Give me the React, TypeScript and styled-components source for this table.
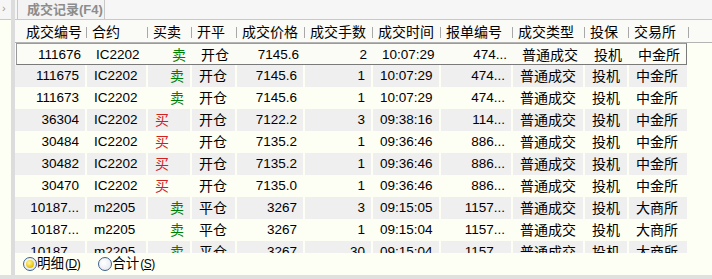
import React from "react";
import styled, { createGlobalStyle } from "styled-components";

const palette = {
  cream: "#fefff4",
  stripe: "#efeff0",
  divider: "#dcdcdc",
  line: "#c8c8c8",
  sep: "#a8a8a8",
  buy: "#d02020",
  sell: "#008000",
  text: "#000000",
};

const COLS = [70, 59, 42, 43, 66, 66, 66, 70, 70, 42, 58];
const grid = COLS.map((w) => `${w}px`).join(" ");

interface ITrade {
  id: string;
  code: string;
  side: "买" | "卖";
  open: string;
  price: string;
  qty: string;
  time: string;
  order: string;
  kind: string;
  hedge: string;
  exch: string;
}

const ic = (id: string, side: "买" | "卖", price: string, qty: string, time: string, order: string): ITrade => ({
  id,
  code: "IC2202",
  side,
  open: "开仓",
  price,
  qty,
  time,
  order,
  kind: "普通成交",
  hedge: "投机",
  exch: "中金所",
});

const m = (qty: string, time: string): ITrade => ({
  id: "10187...",
  code: "m2205",
  side: "卖",
  open: "平仓",
  price: "3267",
  qty,
  time,
  order: "1157...",
  kind: "普通成交",
  hedge: "投机",
  exch: "大商所",
});

const trades: ITrade[] = [
  ic("111676", "卖", "7145.6", "2", "10:07:29", "474..."),
  ic("111675", "卖", "7145.6", "1", "10:07:29", "474..."),
  ic("111673", "卖", "7145.6", "1", "10:07:29", "474..."),
  ic("36304", "买", "7122.2", "3", "09:38:16", "114..."),
  ic("30484", "买", "7135.2", "1", "09:36:46", "886..."),
  ic("30482", "买", "7135.2", "1", "09:36:46", "886..."),
  ic("30470", "买", "7135.0", "1", "09:36:46", "886..."),
  m("3", "09:15:05"),
  m("1", "09:15:04"),
  m("30", "09:15:04"),
];

const headers = ["成交编号", "合约", "买卖", "开平", "成交价格", "成交手数", "成交时间", "报单编号", "成交类型", "投保", "交易所"];

const App = () => {
  return (
    <Page>
      <GlobalStyle />
      <Main>
        <LeftPanel>
          <LeftStrip>›</LeftStrip>
        </LeftPanel>
        <Divider />
        <Content>
          <TabStrip>
            <Tab>成交记录(F4)</Tab>
          </TabStrip>
          <Table>
            <HeaderRow>
              {headers.map((h, i) => (
                <HeadCell key={h} first={i === 0}>
                  {h}
                </HeadCell>
              ))}
            </HeaderRow>
            {trades.map((t, i) => {
              const striped = i % 2 === 1;
              const selected = i === 0;
              return (
                <Row key={i} selected={selected}>
                  <Cell striped={striped} align="right">{t.id}</Cell>
                  <Cell striped={striped}>{t.code}</Cell>
                  <Cell striped={striped} cjk align={t.side === "买" ? "left" : "right"} color={t.side === "买" ? palette.buy : palette.sell}>
                    {t.side}
                  </Cell>
                  <Cell striped={striped} cjk>{t.open}</Cell>
                  <Cell striped={striped} align="right">{t.price}</Cell>
                  <Cell striped={striped} align="right">{t.qty}</Cell>
                  <Cell striped={striped}>{t.time}</Cell>
                  <Cell striped={striped} align="right">{t.order}</Cell>
                  <Cell striped={striped} cjk>{t.kind}</Cell>
                  <Cell striped={striped} cjk>{t.hedge}</Cell>
                  <Cell striped={striped} cjk>{t.exch}</Cell>
                </Row>
              );
            })}
          </Table>
          <Footer>
            <RadioItem>
              <RadioDot checked />
              <span>明细</span>
              <Key>(<u>D</u>)</Key>
            </RadioItem>
            <RadioItem>
              <RadioDot />
              <span>合计</span>
              <Key>(<u>S</u>)</Key>
            </RadioItem>
          </Footer>
        </Content>
      </Main>
      <BottomBar />
    </Page>
  );
};

const GlobalStyle = createGlobalStyle`
  html, body {
    margin: 0;
    padding: 0;
    background: ${palette.cream};
  }
  body {
    font-family: "Liberation Sans", Arial, "Noto Sans CJK SC", sans-serif;
    font-size: 13px;
    color: ${palette.text};
  }
`;

const Page = styled.div`
  width: 712px;
  height: 279px;
  display: flex;
  flex-direction: column;
  overflow: hidden;
  background: ${palette.cream};
`;

const Main = styled.div`
  flex: 1;
  display: flex;
  min-height: 0;
`;

const LeftPanel = styled.div`
  width: 11px;
  display: flex;
  flex-direction: column;
`;

const LeftStrip = styled.div`
  height: 19px;
  border-bottom: 1px solid ${palette.line};
  background: #f6f6f6;
  color: #9a9a9a;
  font-size: 11px;
  line-height: 17px;
  padding-left: 2px;
`;

const Divider = styled.div`
  width: 4px;
  background: ${palette.divider};
`;

const Content = styled.div`
  flex: 1;
  display: flex;
  flex-direction: column;
  min-width: 0;
`;

const TabStrip = styled.div`
  height: 19px;
  border-bottom: 1px solid ${palette.line};
  background: #f6f6f6;
  display: flex;
  padding-left: 2px;
`;

const Tab = styled.div`
  width: 88px;
  border-left: 1px solid ${palette.line};
  border-right: 1px solid ${palette.line};
  background: #f3f3f3;
  color: #8c8c8c;
  font-weight: bold;
  font-size: 13px;
  line-height: 20px;
  padding-left: 9px;
  box-sizing: border-box;
  white-space: nowrap;
`;

const Table = styled.div`
  flex: 1;
  min-height: 0;
  overflow: hidden;
`;

const HeaderRow = styled.div`
  display: grid;
  grid-template-columns: ${grid};
  column-gap: 2px;
  height: 22px;
  border-bottom: 1px solid #b4b4b4;
  background: #fafaf6;
`;

const HeadCell = styled.div<{ first?: boolean }>`
  position: relative;
  font-size: 14px;
  line-height: 25px;
  padding-left: ${(p) => (p.first ? "11px" : "5px")};
  white-space: nowrap;

  &:after {
    content: "";
    position: absolute;
    right: -2px;
    top: 7px;
    width: 1px;
    height: 11px;
    background: ${palette.sep};
  }
`;

const Row = styled.div<{ selected?: boolean }>`
  display: grid;
  grid-template-columns: ${grid};
  column-gap: 2px;
  height: 22px;
  box-sizing: border-box;
  width: 672px;
  ${(p) =>
    p.selected
      ? `
    border: 1px solid #9a9a9a;
    border-right-color: #7a7a7a;
    border-bottom-color: #7a7a7a;
    background: #fcfcf6;
    width: 671px;
    margin-left: 1px;
  `
      : ""}
`;

const Cell = styled.div<{ striped?: boolean; align?: "left" | "right"; cjk?: boolean; color?: string }>`
  background: ${(p) => (p.striped ? palette.stripe : "transparent")};
  color: ${(p) => p.color || palette.text};
  text-align: ${(p) => p.align || "left"};
  font-size: ${(p) => (p.cjk ? "14px" : "13.5px")};
  line-height: 22px;
  padding: 0 6px 0 7px;
  white-space: nowrap;
  overflow: hidden;
`;

const Footer = styled.div`
  height: 22px;
  display: flex;
  align-items: center;
  gap: 18px;
  padding-left: 8px;
`;

const RadioItem = styled.label`
  display: inline-flex;
  align-items: center;
  font-size: 13.5px;
  line-height: 22px;
  white-space: nowrap;
`;

const RadioDot = styled.span<{ checked?: boolean }>`
  position: relative;
  flex: none;
  width: 12px;
  height: 12px;
  border-radius: 50%;
  border: 1px solid #3c5f8c;
  background: radial-gradient(circle at 40% 40%, #ffffff, #dfe4ea);

  &:after {
    content: "";
    display: ${(p) => (p.checked ? "block" : "none")};
    position: absolute;
    left: 50%;
    top: 50%;
    width: 8px;
    height: 8px;
    border-radius: 50%;
    transform: translate(-50%, -50%);
    background: radial-gradient(circle at 40% 35%, #fff6a0, #e8c000 70%);
  }
`;

const Key = styled.span`
  font-size: 12px;
  margin-left: 1px;
  letter-spacing: -0.5px;
`;

const BottomBar = styled.div`
  height: 4px;
  background: #e0e0e0;
`;

export default App;
